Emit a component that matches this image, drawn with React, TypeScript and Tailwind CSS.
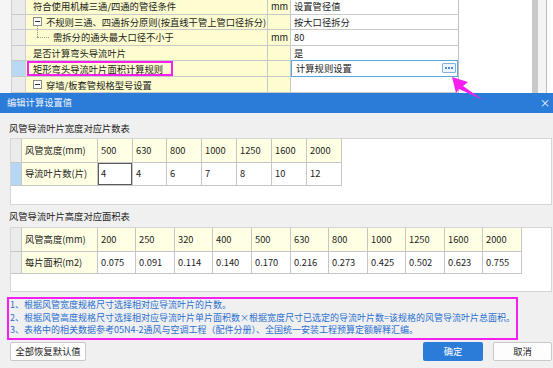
import React from "react";

const Y = "bg-[#fdfdcf]";

function Minus() {
  return (
    <span className="inline-flex w-[9px] h-[9px] border border-[#8a8a8a] bg-white items-center justify-center mr-[4px]">
      <span className="w-[5px] h-[1px] bg-[#333]" />
    </span>
  );
}

type Row = { name: React.ReactNode; unit?: string; value?: React.ReactNode; sel?: boolean; edit?: boolean };

function PropRow({ r }: { r: Row }) {
  return (
    <div className="flex h-[16px] border-b border-[#c9c9c9] leading-[12px]">
      <div className={`w-[14px] border-r border-[#d0d0d0] ${r.sel ? "bg-[#b9d8f4]" : "bg-[#ebebeb]"}`} />
      <div className={`w-[242px] ${Y} border-r border-[#c9c9c9] flex items-center`}>{r.name}</div>
      <div className={`w-[23px] ${Y} border-r border-[#c9c9c9] flex items-center pl-[3px]`}>{r.unit}</div>
      <div className="w-[168px] bg-white border-r border-[#c0c0c0] flex items-center">
        {r.edit ? (
          <div className="w-full h-[17px] -mt-[1px] border border-[#56a7dd] flex items-center justify-between pl-[4px] pr-[1px]">
            <span>计算规则设置</span>
            <span className="w-[14px] h-[10px] border border-[#7fb3e0] bg-[#eef5fc] rounded-[1px] flex items-center justify-center gap-[1px]">
              <span className="w-[2px] h-[2px] bg-[#4b8fd0]" />
              <span className="w-[2px] h-[2px] bg-[#4b8fd0]" />
              <span className="w-[2px] h-[2px] bg-[#4b8fd0]" />
            </span>
          </div>
        ) : (
          <span className="pl-[3px]">{r.value}</span>
        )}
      </div>
    </div>
  );
}

const w1 = ["w-[35px]", "w-[34px]", "w-[35px]", "w-[35px]", "w-[35px]", "w-[35px]", "w-[35px]"];
const w2 = ["w-[38px]", "w-[39px]", "w-[38px]", "w-[39px]", "w-[39px]", "w-[38px]", "w-[39px]", "w-[38px]", "w-[39px]", "w-[38px]", "w-[39px]"];

function Table({
  head,
  body,
  hv,
  bv,
  widths,
  blueSel,
  focusFirst,
  h2,
}: {
  head: string;
  body: string;
  hv: string[];
  bv: string[];
  widths: string[];
  blueSel?: boolean;
  focusFirst?: boolean;
  h2: string;
}) {
  return (
    <div className="flex flex-col">
      <div className="flex h-[24px]">
        <div className="w-[11px] bg-[#ebebeb] border-r border-b border-[#c6c6c6]" />
        <div className="w-[76px] bg-[#ffffe3] border-r border-b border-[#c6c6c6] flex items-center pl-[3px]">{head}</div>
        {hv.map((v, i) => (
          <div key={i} className={`${widths[i]} bg-[#ffffe3] border-r border-b border-[#c6c6c6] flex items-center pl-[3px]`}>
            {v}
          </div>
        ))}
      </div>
      <div className={`flex ${h2}`}>
        <div className={`w-[11px] border-r border-b border-[#c6c6c6] ${blueSel ? "bg-[#b6d6f4]" : "bg-[#ebebeb]"}`} />
        <div className="w-[76px] bg-[#ffffe3] border-r border-b border-[#c6c6c6] flex items-center pl-[3px]">{body}</div>
        {bv.map((v, i) => (
          <div
            key={i}
            className={`${widths[i]} bg-white border-r border-b border-[#c6c6c6] flex items-center pl-[3px] ${
              focusFirst && i === 0 ? "shadow-[inset_0_0_0_1px_#5a5a5a]" : ""
            }`}
          >
            {v}
          </div>
        ))}
      </div>
    </div>
  );
}

export default function App() {
  const rows: Row[] = [
    { name: <span className="pl-[7px]">符合使用机械三通/四通的管径条件</span>, unit: "mm", value: "设置管径值" },
    {
      name: (
        <span className="pl-[7px] flex items-center">
          <Minus />
          不规则三通、四通拆分原则(按直线干管上管口径拆分)
        </span>
      ),
      value: "按大口径拆分",
    },
    {
      name: (
        <span className="relative flex items-center h-full pl-[27px]">
          <span className="absolute left-[11px] top-[-5px] h-[12px] border-l border-dotted border-[#999]" />
          <span className="absolute left-[11px] top-[7px] w-[12px] border-t border-dotted border-[#999]" />
          需拆分的通头最大口径不小于
        </span>
      ),
      unit: "mm",
      value: "80",
    },
    { name: <span className="pl-[7px]">是否计算弯头导流叶片</span>, value: "是" },
    {
      name: (
        <span className="ml-[1px] h-[15px] w-[146px] border-2 border-[#f51ff0] flex items-center pl-[4px]">
          矩形弯头导流叶片面积计算规则
        </span>
      ),
      sel: true,
      edit: true,
    },
    {
      name: (
        <span className="pl-[7px] flex items-center">
          <Minus />
          穿墙/板套管规格型号设置
        </span>
      ),
      value: "",
    },
  ];

  return (
    <div className="relative w-[553px] h-[368px] overflow-hidden bg-white font-['Noto_Sans_CJK_SC',sans-serif] text-[9.3px] text-[#1c1c1c]">
      {/* property grid */}
      <div className="h-[93px] flex overflow-hidden">
        <div className="w-[12px] bg-[#f5f5f5] border-r border-[#cfcfcf]" />
        <div className="w-[447px] flex flex-col -mt-[1px]">
          {rows.map((r, i) => (
            <PropRow key={i} r={r} />
          ))}
        </div>
        <div className="flex-1 flex">
          <div className="w-[73px] bg-white" />
          <div className="w-[6px] bg-[#c9c9c9]" />
          <div className="w-[8px] bg-[#f4f4f4]" />
          <div className="w-[1px] bg-[#bdbdbd]" />
          <div className="flex-1 bg-white" />
        </div>
      </div>

      {/* dialog */}
      <div className="h-[275px] flex flex-col bg-[#f0f0f0]">
        <div className="h-[20px] bg-[#2b7bd9] flex items-center justify-between pl-[7px] pr-[3px] text-[#eef4fc]">
          <span>编辑计算设置值</span>
          <span className="text-white text-[10px] leading-none">×</span>
        </div>
        <div className="flex flex-col pl-[10px] pr-[1px]">
          <div className="mt-[7px] h-[16px] leading-[16px] -ml-[1px]">风管导流叶片宽度对应片数表</div>
          <div className="mt-[2px] h-[67px] bg-white border border-[#d6d6d6]">
            <Table
              head="风管宽度(mm)"
              body="导流叶片数(片)"
              hv={["500", "630", "800", "1000", "1250", "1600", "2000"]}
              bv={["4", "4", "6", "7", "8", "10", "12"]}
              widths={w1}
              blueSel
              focusFirst
              h2="h-[23px]"
            />
          </div>
          <div className="mt-[3px] h-[16px] leading-[16px] -ml-[1px]">风管导流叶片高度对应面积表</div>
          <div className="mt-[3px] h-[65px] bg-white border border-[#d6d6d6]">
            <Table
              head="风管高度(mm)"
              body="每片面积(m2)"
              hv={["200", "250", "320", "400", "500", "630", "800", "1000", "1250", "1600", "2000"]}
              bv={["0.075", "0.091", "0.114", "0.140", "0.170", "0.216", "0.273", "0.425", "0.502", "0.623", "0.755"]}
              widths={w2}
              h2="h-[22px]"
            />
          </div>
          <div className="mt-[5px] -ml-[3px] w-[511px] h-[43px] border-2 border-[#f51ff0] pl-[1px] text-[#2a6fd1] text-[9px] leading-[12.7px] whitespace-nowrap">
            <div>1、根据风管宽度规格尺寸选择相对应导流叶片的片数。</div>
            <div>2、根据风管高度规格尺寸选择相对应导流叶片单片面积数×根据宽度尺寸已选定的导流叶片数=该规格的风管导流叶片总面积。</div>
            <div>3、表格中的相关数据参考05N4-2通风与空调工程（配件分册）、全国统一安装工程预算定额解释汇编。</div>
          </div>
          <div className="mt-[2px] h-[19px] flex justify-between">
            <div className="w-[76px] h-full bg-[#fdfdfd] border border-[#c9c9c9] rounded-[2px] flex items-center justify-center">
              全部恢复默认值
            </div>
            <div className="flex gap-[10px]">
              <div className="w-[60px] h-full bg-[#2b7bd9] text-white rounded-[2px] flex items-center justify-center">确定</div>
              <div className="w-[59px] h-full bg-[#fdfdfd] border border-[#c9c9c9] rounded-[2px] flex items-center justify-center">
                取消
              </div>
            </div>
          </div>
        </div>
      </div>

      {/* annotation arrow */}
      <svg className="absolute left-0 top-0 pointer-events-none" width="553" height="368" viewBox="0 0 553 368">
        <polygon points="452,77 468,82 463,86 483,100 459,89 456,93" fill="#f51ff0" />
      </svg>
    </div>
  );
}
